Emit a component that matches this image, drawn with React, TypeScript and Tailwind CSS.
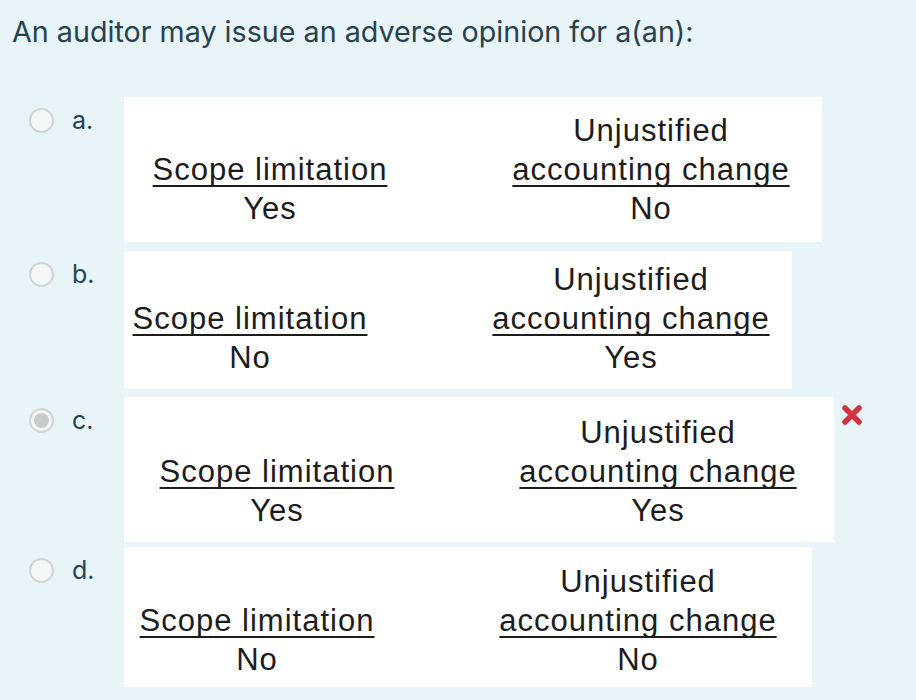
import React from 'react';

type Option = {
  letter: string;
  scope: string;
  change: string;
  width: string;
  height: string;
  pad: string;
  selected?: boolean;
  wrong?: boolean;
  gapAfter: string;
};

const options: Option[] = [
  { letter: 'a.', scope: 'Yes', change: 'No', width: 'w-[698px]', height: 'h-[145px]', pad: 'pl-[26px] pb-[14px]', gapAfter: 'mb-[9px]' },
  { letter: 'b.', scope: 'No', change: 'Yes', width: 'w-[668px]', height: 'h-[138px]', pad: 'pl-[6px] pb-[12px]', gapAfter: 'mb-[8px]' },
  { letter: 'c.', scope: 'Yes', change: 'Yes', width: 'w-[710px]', height: 'h-[145px]', pad: 'pl-[33px] pb-[12px]', selected: true, wrong: true, gapAfter: 'mb-[5px]' },
  { letter: 'd.', scope: 'No', change: 'No', width: 'w-[688px]', height: 'h-[140px]', pad: 'pl-[13px] pb-[8px]', gapAfter: 'mb-0' },
];

const u = 'underline decoration-2 underline-offset-[5px] [text-decoration-skip-ink:none]';

function Radio({ selected }: { selected?: boolean }) {
  return (
    <div className="w-[25px] h-[25px] rounded-full border-2 border-[#cfd4d6] bg-[#f4f7f8] flex items-center justify-center">
      {selected && <div className="w-[15px] h-[15px] rounded-full bg-[#c9cccd]" />}
    </div>
  );
}

export default function App() {
  return (
    <div className="w-[916px] h-[700px] bg-[#e8f4f8] overflow-hidden">
      <h1 className="pl-[12px] pt-[14px] h-[97px] text-[28.7px] leading-[36px] text-[#264250] font-['Inter'] font-normal">
        An auditor may issue an adverse opinion for a(an):
      </h1>
      {options.map((o) => (
        <div key={o.letter} className={`flex ${o.gapAfter}`}>
          <div className="w-[124px] flex items-start pt-[11px] pl-[29px]">
            <Radio selected={o.selected} />
            <span className="ml-[18px] -mt-[3px] text-[25px] leading-[30px] text-[#264250] font-['Inter']">
              {o.letter}
            </span>
          </div>
          <div
            className={`${o.width} ${o.height} ${o.pad} bg-white flex items-end text-[31px] leading-[39px] tracking-[1px] text-[#1c1c1c] font-['Liberation_Sans']`}
          >
            <div className="w-[240px] text-center">
              <div><span className={u}>Scope limitation</span></div>
              <div>{o.scope}</div>
            </div>
            <div className="w-[300px] ml-[111px] text-center">
              <div>Unjustified</div>
              <div><span className={u}>accounting change</span></div>
              <div>{o.change}</div>
            </div>
          </div>
          {o.wrong && (
            <svg className="ml-[7px] mt-[8px]" width="22" height="20" viewBox="0 0 22 20">
              <path d="M4 3 L18 17 M18 3 L4 17" stroke="#d0323f" strokeWidth="5.5" strokeLinecap="round" />
            </svg>
          )}
        </div>
      ))}
    </div>
  );
}
